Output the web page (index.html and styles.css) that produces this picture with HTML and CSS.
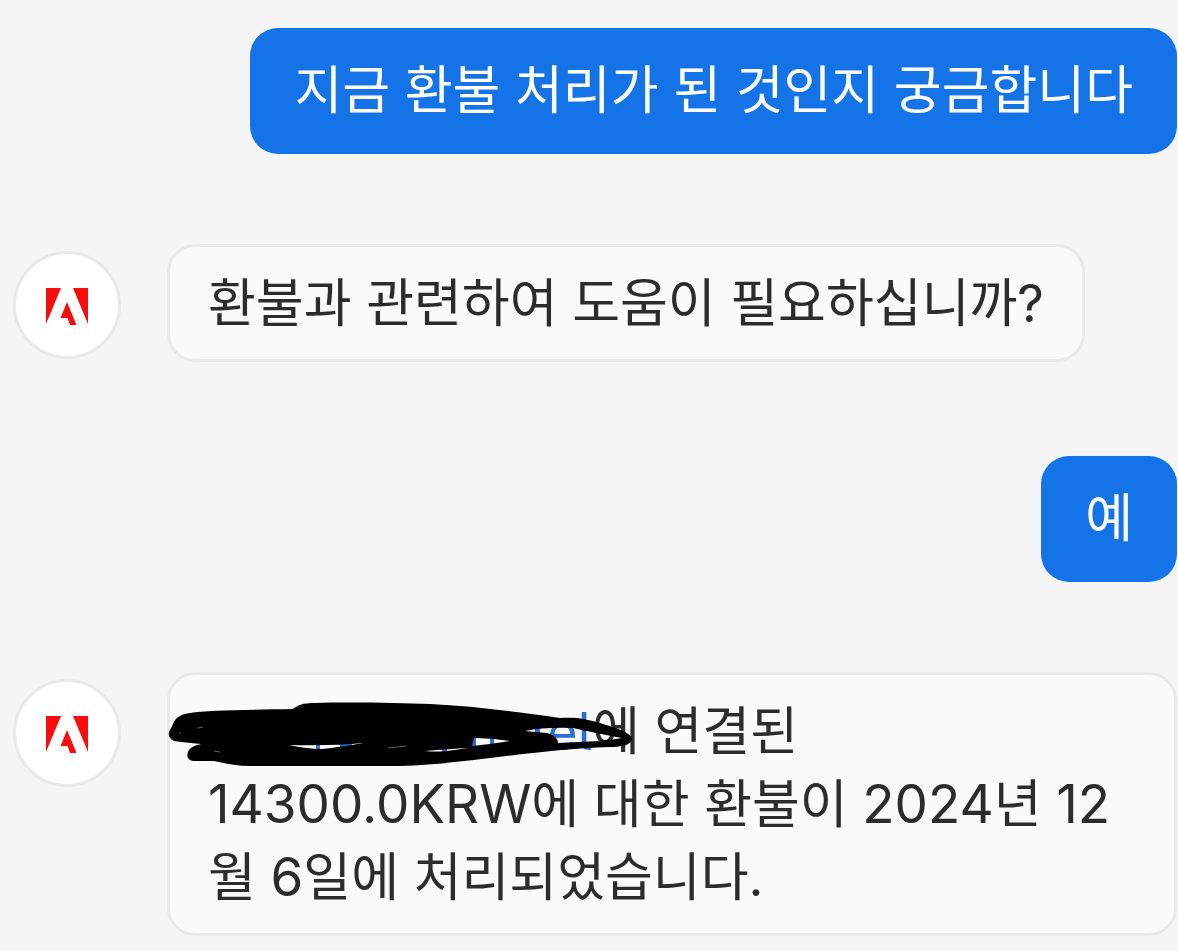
FILE: index.html
```html
<!DOCTYPE html>
<html lang="ko">
<head>
<meta charset="utf-8">
<meta name="viewport" content="width=device-width, initial-scale=1">
<title>Adobe 고객 지원 채팅</title>
<link rel="stylesheet" href="styles.css">
</head>
<body>
<main class="chat">
  <div class="row row-user">
    <p class="bubble bubble-user">지금 환불 처리가 된 것인지 궁금합니다</p>
  </div>
  <div class="row row-agent">
    <div class="avatar">
      <svg class="logo" viewBox="0 0 42 37" role="img" aria-label="Adobe"><path d="M0 0H15L0 36ZM27 0H42V36ZM21 14L30.500 37H24L21.500 30H14.500Z"/></svg>
    </div>
    <p class="bubble bubble-agent">환불과 관련하여 도움이 필요하십니까?</p>
  </div>
  <div class="row row-user">
    <p class="bubble bubble-user">예</p>
  </div>
  <div class="row row-agent">
    <div class="avatar">
      <svg class="logo" viewBox="0 0 42 37" role="img" aria-label="Adobe"><path d="M0 0H15L0 36ZM27 0H42V36ZM21 14L30.500 37H24L21.500 30H14.500Z"/></svg>
    </div>
    <p class="bubble bubble-agent">
      <a class="account" href="#">el</a>에 연결된<br><span class="latin">14300.0KRW</span>에 대한 환불이 <span class="latin">2024</span>년 <span class="latin">12</span>월 <span class="latin">6</span>일에 처리되었습니다.
      <svg class="scribble" viewBox="167 700 470 70" aria-hidden="true">
        <path class="ink-link" d="M472 738h4v9h-4zM490 738h4v8h-4zM535 728h5v5h-5zM316 744h4v6h-4zM340 743h12v4h-12zM442 748h5v5h-5z"/>
        <path class="ink" fill-rule="evenodd" d="M169 732C170 729 172 727 173 724C176 716 183 714 190 713C208 710 240 710 293 709C298 705 303 703 315 703C350 702 400 703 430 704C475 706 525 713 560 718C578 717 585 719 600 723C620 729 631 733 632 739C631 745 622 747 610 747C575 748 540 752 515 755C480 759 440 765 400 766H250C236 766 224 763 214 761H193C187 760 186 755 189 750C192 746 197 745 201 744C190 743 181 742 174 741C170 739 168 736 169 732ZM289 745Q307 749 322 749Q340 747 363 743Q335 746 289 745ZM525 731Q536 732 547 733Q558 736 558 743L600 741Q611 740 622 738Q595 733 573 728Q545 727 525 731ZM474 738L472 746Q492 744 510 741Q492 738 474 738ZM425 751Q436 752 446 751Q456 750 468 748Q450 749 425 751Z"/>
        <path class="glint" d="M198 728l5-1M179 733h2M214 751l6 1M388 748l18-2"/>
      </svg>
    </p>
  </div>
</main>
</body>
</html>
```
FILE: styles.css
```css
* {
  box-sizing: border-box;
}

body {
  margin: 0;
  background: #f5f5f5;
  color: #2c2c2c;
  font-family: Inter, "Noto Sans CJK KR", sans-serif;
  font-size: 52px;
  line-height: 72px;
}

.chat {
  display: flex;
  flex-direction: column;
  gap: 90px;
  padding: 28px 1px 16px 13px;
}

.row {
  display: flex;
  align-items: flex-start;
}

.row-user {
  justify-content: flex-end;
}

.row-agent {
  gap: 46px;
}

.row-agent + .row-user {
  margin-top: 4px;
}

.bubble {
  margin: 0;
  border-radius: 28px;
}

.bubble-user {
  padding: 27px 44px;
  background: #1473e6;
  color: #fff;
}

.bubble-agent {
  position: relative;
  padding: 21px 38px 19px;
  border: 3px solid #e9e9e9;
  background: #fafafa;
}

.avatar {
  display: flex;
  flex: none;
  align-items: center;
  justify-content: center;
  width: 108px;
  height: 108px;
  margin-top: 7px;
  padding-top: 2px;
  border: 3px solid #e9e9e9;
  border-radius: 50%;
  background: #fff;
}

.logo {
  width: 42px;
  height: 37px;
  fill: #fa0c0c;
}

.latin {
  font-size: 53px;
}

.account {
  display: inline-block;
  width: 384px;
  color: #2a6fd6;
  font-feature-settings: "cv05";
  text-align: right;
  text-decoration: none;
}

.scribble {
  position: absolute;
  top: 25px;
  left: -3px;
  width: 470px;
  height: 70px;
}

.ink {
  fill: #000;
}

.ink-link {
  fill: #2a6fd6;
}

.glint {
  fill: none;
  stroke: #56607a;
  stroke-width: 1;
}
```
